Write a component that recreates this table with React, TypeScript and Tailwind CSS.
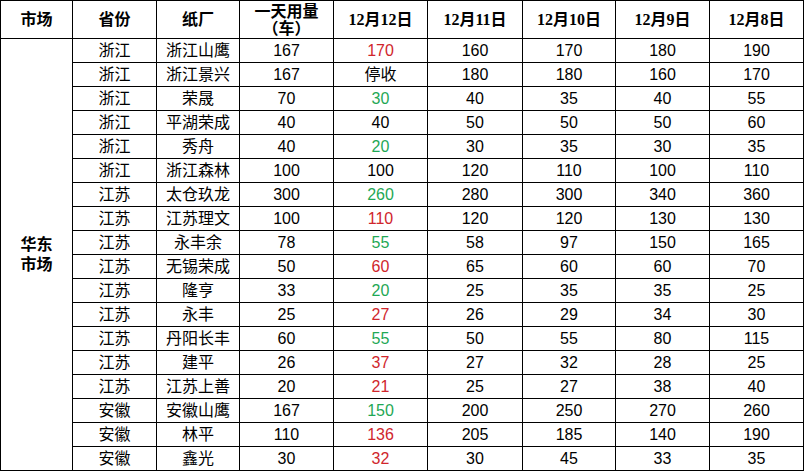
type Tone = 'red' | 'green' | undefined;

type Row = {
  province: string;
  mill: string;
  daily: string;
  today: string;
  tone?: Tone;
  prev: string[];
};

const rows: Row[] = [
  { province: '浙江', mill: '浙江山鹰', daily: '167', today: '170', tone: 'red', prev: ['160', '170', '180', '190'] },
  { province: '浙江', mill: '浙江景兴', daily: '167', today: '停收', prev: ['180', '180', '160', '170'] },
  { province: '浙江', mill: '荣晟', daily: '70', today: '30', tone: 'green', prev: ['40', '35', '40', '55'] },
  { province: '浙江', mill: '平湖荣成', daily: '40', today: '40', prev: ['50', '50', '50', '60'] },
  { province: '浙江', mill: '秀舟', daily: '40', today: '20', tone: 'green', prev: ['30', '35', '30', '35'] },
  { province: '浙江', mill: '浙江森林', daily: '100', today: '100', prev: ['120', '110', '100', '110'] },
  { province: '江苏', mill: '太仓玖龙', daily: '300', today: '260', tone: 'green', prev: ['280', '300', '340', '360'] },
  { province: '江苏', mill: '江苏理文', daily: '100', today: '110', tone: 'red', prev: ['120', '120', '130', '130'] },
  { province: '江苏', mill: '永丰余', daily: '78', today: '55', tone: 'green', prev: ['58', '97', '150', '165'] },
  { province: '江苏', mill: '无锡荣成', daily: '50', today: '60', tone: 'red', prev: ['65', '60', '60', '70'] },
  { province: '江苏', mill: '隆亨', daily: '33', today: '20', tone: 'green', prev: ['25', '35', '35', '25'] },
  { province: '江苏', mill: '永丰', daily: '25', today: '27', tone: 'red', prev: ['26', '29', '34', '30'] },
  { province: '江苏', mill: '丹阳长丰', daily: '60', today: '55', tone: 'green', prev: ['50', '55', '80', '115'] },
  { province: '江苏', mill: '建平', daily: '26', today: '37', tone: 'red', prev: ['27', '32', '28', '25'] },
  { province: '江苏', mill: '江苏上善', daily: '20', today: '21', tone: 'red', prev: ['25', '27', '38', '40'] },
  { province: '安徽', mill: '安徽山鹰', daily: '167', today: '150', tone: 'green', prev: ['200', '250', '270', '260'] },
  { province: '安徽', mill: '林平', daily: '110', today: '136', tone: 'red', prev: ['205', '185', '140', '190'] },
  { province: '安徽', mill: '鑫光', daily: '30', today: '32', tone: 'red', prev: ['30', '45', '33', '35'] },
];

const dates = ['12月12日', '12月11日', '12月10日', '12月9日', '12月8日'];

// header cells: bold, serif digits like the spreadsheet export
const head =
  "bg-white flex items-center justify-center text-[16px] leading-4 font-bold text-black font-['Liberation_Serif','Noto_Sans_CJK_SC',serif]";
const cell =
  "bg-white flex items-center justify-center text-[16px] leading-4 font-['Liberation_Sans','Noto_Sans_CJK_SC',sans-serif]";

function toneClass(tone: Tone) {
  if (tone === 'red') return 'text-[#d0262c]';
  if (tone === 'green') return 'text-[#1fa855]';
  return 'text-black';
}

export default function App() {
  return (
    <div className="w-[804px] h-[471px] bg-white">
      <div className="grid grid-cols-[71px_83px_82px_93px_93px_94px_92px_93px_93px] grid-rows-[37px_repeat(18,23px)] gap-px bg-black border border-black w-[804px]">
        <div className={head}>市场</div>
        <div className={head}>省份</div>
        <div className={head}>纸厂</div>
        <div className={`${head} flex-col text-center leading-[17px]`}>
          <span>一天用量</span>
          <span>（车）</span>
        </div>
        {dates.map((d) => (
          <div key={d} className={head}>
            {d}
          </div>
        ))}

        <div className={`${head} col-start-1 row-start-2 row-span-18 flex-col leading-5`}>
          <span>华东</span>
          <span>市场</span>
        </div>

        {rows.map((r) => (
          <div key={r.mill} className="contents">
            <div className={`${cell} col-start-2 text-black`}>{r.province}</div>
            <div className={`${cell} text-black`}>{r.mill}</div>
            <div className={`${cell} text-black`}>{r.daily}</div>
            <div className={`${cell} ${toneClass(r.tone)}`}>{r.today}</div>
            {r.prev.map((v, i) => (
              <div key={i} className={`${cell} text-black`}>
                {v}
              </div>
            ))}
          </div>
        ))}
      </div>
    </div>
  );
}
